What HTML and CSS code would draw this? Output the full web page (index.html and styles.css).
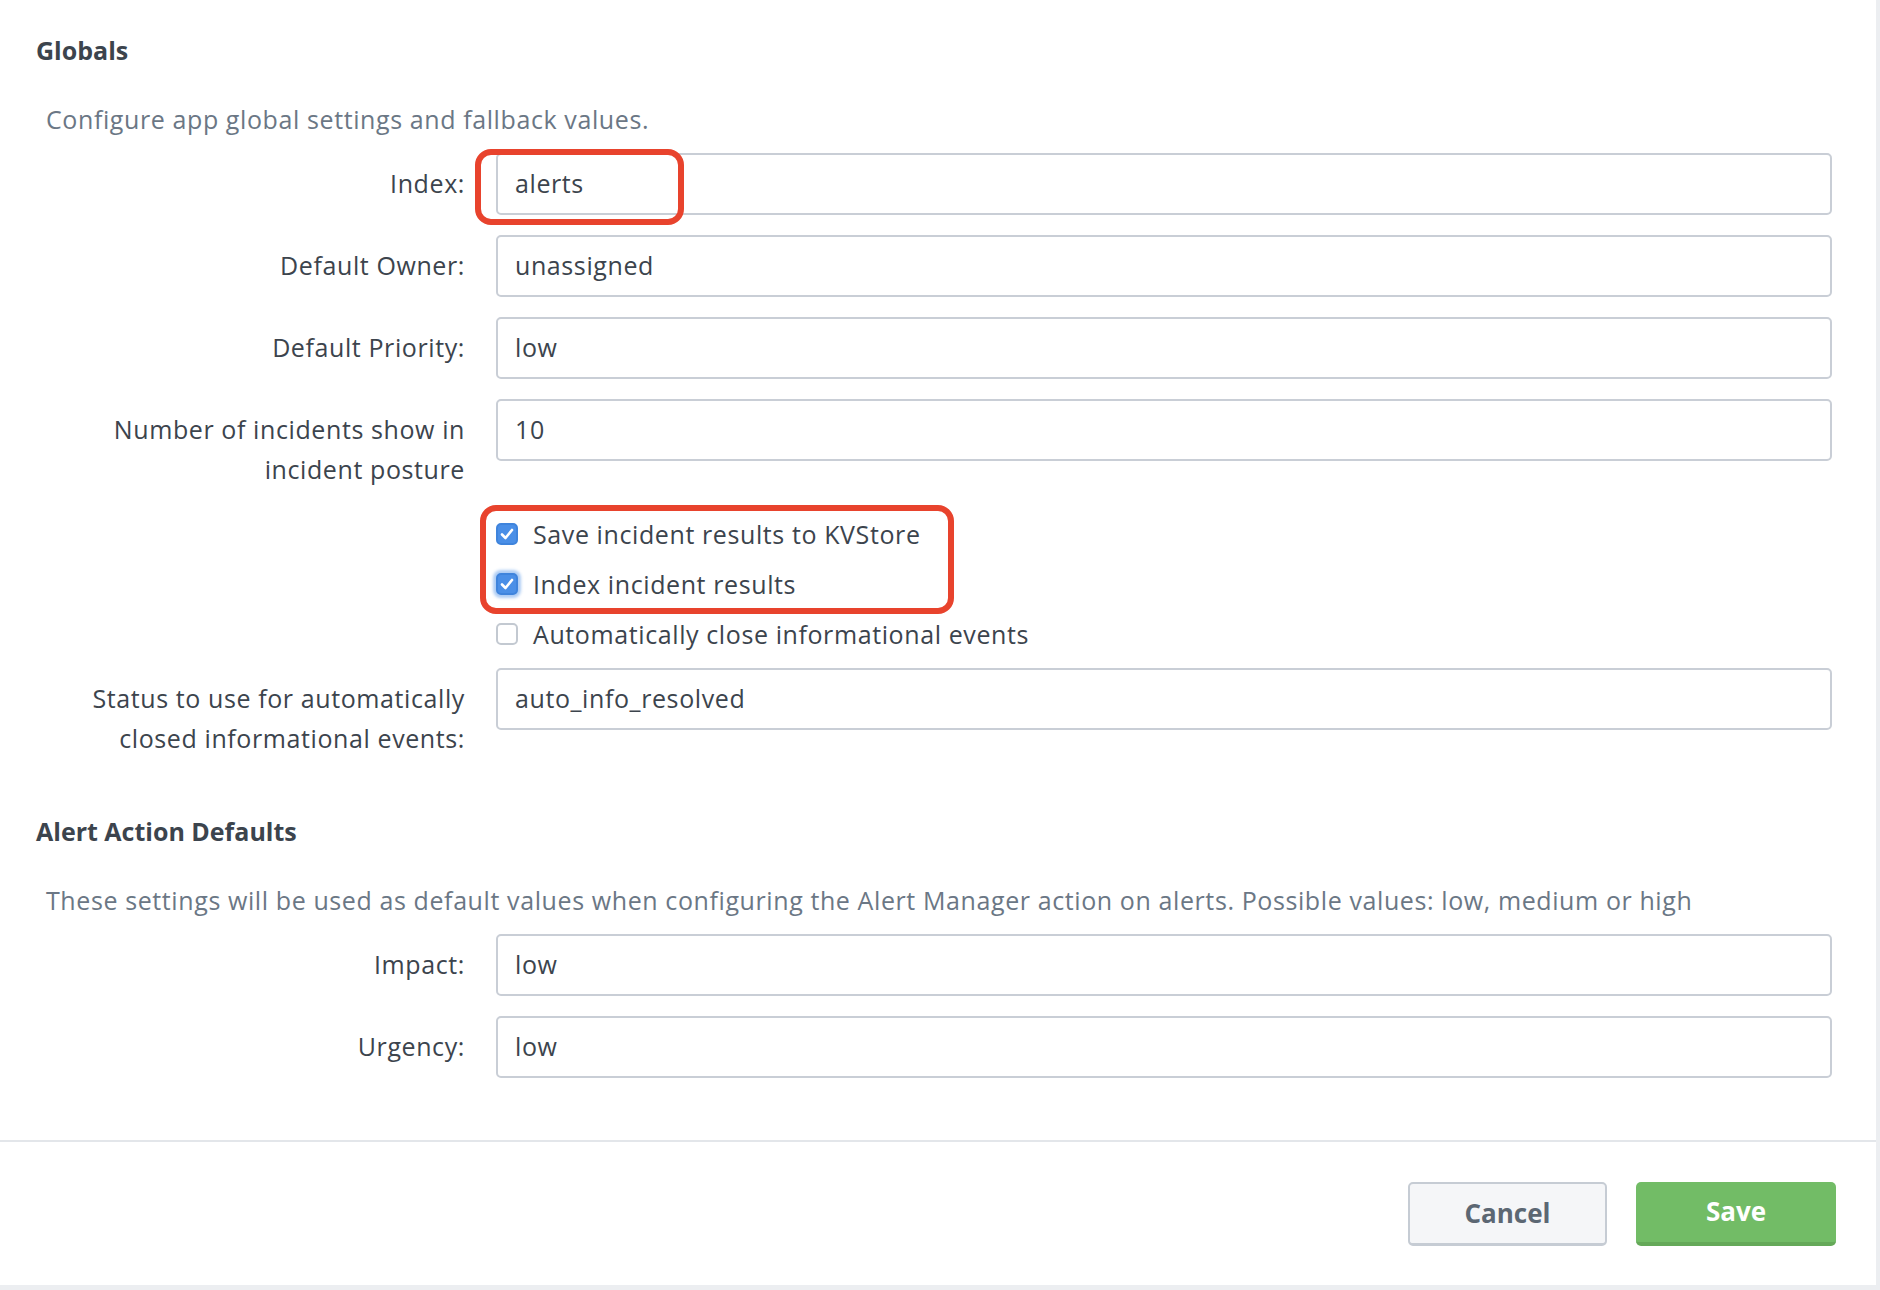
FILE: index.html
```html
<!DOCTYPE html>
<html lang="en">
<head>
<meta charset="UTF-8" />
<title>Alert Manager Settings</title>
<link rel="stylesheet" href="styles.css">
</head>
<body>

<div class="panel">
  <div class="panel-body">

    <section class="section">
      <h2>Globals</h2>
      <p class="desc">Configure app global settings and fallback values.</p>

      <div class="field">
        <label>Index:</label>
        <input type="text" value="alerts">
      </div>
      <div class="field">
        <label>Default Owner:</label>
        <input type="text" value="unassigned">
      </div>
      <div class="field">
        <label>Default Priority:</label>
        <input type="text" value="low">
      </div>
      <div class="field">
        <label>Number of incidents show in<br>incident posture</label>
        <input type="text" value="10">
      </div>

      <div class="checks">
        <div class="check-row">
          <span class="box checked"><svg viewBox="0 0 22 22"><path d="M6 11.5l3.5 3.5 6.5-8"/></svg></span>
          <span>Save incident results to KVStore</span>
        </div>
        <div class="check-row">
          <span class="box checked focus"><svg viewBox="0 0 22 22"><path d="M6 11.5l3.5 3.5 6.5-8"/></svg></span>
          <span>Index incident results</span>
        </div>
        <div class="check-row">
          <span class="box"></span>
          <span>Automatically close informational events</span>
        </div>
      </div>

      <div class="field">
        <label>Status to use for automatically<br>closed informational events:</label>
        <input type="text" value="auto_info_resolved">
      </div>
    </section>

    <section class="section second">
      <h2>Alert Action Defaults</h2>
      <p class="desc">These settings will be used as default values when configuring the Alert Manager action on alerts. Possible values: low, medium or high</p>

      <div class="field">
        <label>Impact:</label>
        <input type="text" value="low">
      </div>
      <div class="field wide-gap">
        <label>Urgency:</label>
        <input type="text" value="low">
      </div>
    </section>

  </div>

  <div class="panel-footer">
    <button class="btn btn-cancel">Cancel</button>
    <button class="btn btn-save">Save</button>
  </div>

  <!-- red annotation marks -->
  <div class="mark mark-index"></div>
  <div class="mark mark-checks"></div>
</div>

</body>
</html>
```

FILE: styles.css
```css
* {
  box-sizing: border-box;
}
body {
  margin: 0;
  background: #eceef1;
  font-family: "Open Sans", Lato, sans-serif;
  color: #3c444d;
  letter-spacing: 0.6px;
}

.panel {
  position: relative;
  width: 1876px;
  height: 1285px;
  background: #fff;
  display: flex;
  flex-direction: column;
}
.panel-body {
  flex-grow: 1;
  padding: 30px 44px 0 36px;
}

/* Sections */
.section h2 {
  margin: 0;
  font-size: 25px;
  font-weight: 700;
  line-height: 40px;
  letter-spacing: 0;
}
.section.second {
  margin-top: 53px;
}
.desc {
  margin: 29px 0 14px 10px;
  font-size: 25px;
  line-height: 40px;
  color: #6b7785;
}

/* Form rows */
.field {
  display: grid;
  grid-template-columns: 429px 1fr;
  column-gap: 31px;
  align-items: start;
  margin-bottom: 20px;
}
.field:last-child {
  margin-bottom: 0;
}
.field.wide-gap {
  margin-top: 2px;
}
.field label {
  text-align: right;
  padding-top: 10px;
  font-size: 25px;
  line-height: 40px;
}
.field input {
  height: 62px;
  width: 100%;
  padding: 0 17px 2px;
  font-family: inherit;
  font-size: 25px;
  letter-spacing: inherit;
  color: #3c444d;
  border: 2px solid #c9ced6;
  border-radius: 5px;
  outline: none;
}

/* Checkboxes */
.checks {
  margin: 13px 0 9px 460px;
}
.check-row {
  display: flex;
  align-items: center;
  gap: 15px;
  height: 50px;
  font-size: 25px;
}
.box {
  width: 22px;
  height: 22px;
  border: 2px solid #c3c9d1;
  border-radius: 5px;
  background: #fff;
  display: flex;
}
.box svg {
  width: 100%;
  height: 100%;
  fill: none;
  stroke: #fff;
  stroke-width: 2.6;
  stroke-linecap: round;
  stroke-linejoin: round;
}
.box.checked {
  background: #4a8fe7;
  border-color: #3f84dc;
}
.box.checked svg {
  margin: -2px;
  width: calc(100% + 4px);
  height: calc(100% + 4px);
}
.box.focus {
  box-shadow: 0 0 3px 3px rgba(74, 143, 231, 0.45);
}

/* Footer */
.panel-footer {
  border-top: 2px solid #e3e6ea;
  padding: 40px 40px 39px;
  display: flex;
  justify-content: flex-end;
  gap: 29px;
}
.btn {
  width: 200px;
  height: 64px;
  padding-bottom: 3px;
  border-radius: 5px;
  font-family: inherit;
  font-size: 26px;
  font-weight: 700;
  letter-spacing: 0;
  cursor: pointer;
}
.btn-cancel {
  width: 199px;
  background: #f5f6f8;
  color: #5c6773;
  border: 2px solid #c6ccd4;
  border-bottom-width: 3px;
}
.btn-save {
  background: #72bc66;
  color: #fff;
  border: none;
  border-bottom: 4px solid #65a959;
}

/* Annotation overlays */
.mark {
  position: absolute;
  border: 6px solid #e8432d;
  border-radius: 16px;
  pointer-events: none;
}
.mark-index {
  left: 475px;
  top: 149px;
  width: 209px;
  height: 76px;
}
.mark-checks {
  left: 480px;
  top: 505px;
  width: 474px;
  height: 109px;
}
```
